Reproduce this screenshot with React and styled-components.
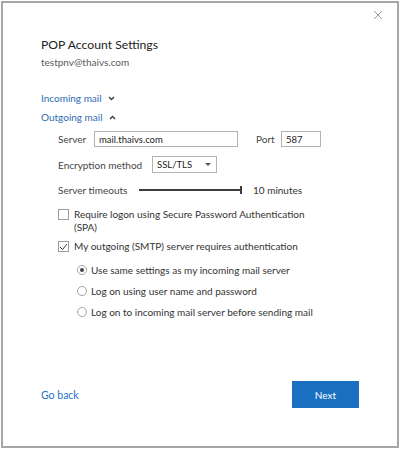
import React from 'react';
import styled, { createGlobalStyle } from 'styled-components';

const Global = createGlobalStyle`
  html, body { margin: 0; padding: 0; background: #fff; }
  body { font-family: Lato, "Noto Sans", sans-serif; }
  * { box-sizing: border-box; }
`;

const Dialog = styled.div`
  margin: 1px 0 0 1px;
  width: 398px;
  height: 447px;
  border: 2px solid #a6a6a6;
  background: #fff;
  display: flex;
  flex-direction: column;
  color: #333;
  font-size: 10px;
`;

const TopBar = styled.div`
  height: 32px;
  display: flex;
  justify-content: flex-end;
  align-items: flex-start;
  padding: 8px 15px 0 0;
`;

const CloseButton = styled.button`
  width: 8px;
  height: 8px;
  padding: 0;
  border: 0;
  background: none;
  display: flex;
`;

const Content = styled.div`
  padding: 0 38px;
  display: flex;
  flex-direction: column;
`;

const Title = styled.h1`
  margin: 0;
  font-size: 12.2px;
  line-height: 20px;
  font-weight: 400;
  color: #222;
`;

const Email = styled.div`
  font-size: 10px;
  line-height: 14px;
  color: #5a5a5a;
`;

const SectionToggle = styled.div`
  margin-top: ${p => p.$mt}px;
  display: flex;
  align-items: center;
  gap: 6px;
  font-size: 10px;
  line-height: 14px;
  color: #2d6db4;
`;

const SectionBody = styled.div`
  padding-left: 17px;
  display: flex;
  flex-direction: column;
`;

const FieldRow = styled.div`
  margin-top: ${p => p.$mt}px;
  height: ${p => p.$h}px;
  display: flex;
  align-items: center;
`;

const Label = styled.span`
  width: ${p => p.$w}px;
  margin-left: ${p => p.$ml || 0}px;
  flex: none;
  line-height: 14px;
  color: #444;
`;

const TextInput = styled.input`
  width: ${p => p.$w}px;
  height: 16px;
  border: 1px solid #b3b3b3;
  padding: 0 4px;
  font-family: inherit;
  font-size: 9.5px;
  color: #222;
  background: #fff;
  outline: none;
`;

const Select = styled.div`
  width: 65px;
  height: 17px;
  border: 1px solid #b3b3b3;
  padding: 0 5px 0 4px;
  display: flex;
  align-items: center;
  justify-content: space-between;
  font-size: 9.5px;
  color: #222;
`;

const Caret = styled.span`
  width: 0;
  height: 0;
  border-left: 3px solid transparent;
  border-right: 3px solid transparent;
  border-top: 3px solid #555;
`;

const TimeoutRow = styled.div`
  margin-top: 10px;
  height: 14px;
  display: grid;
  grid-template-columns: 81px 103px max-content;
  align-items: center;
`;

const TimeoutLabel = styled.span`
  line-height: 14px;
  color: #444;
  white-space: nowrap;
`;

const SliderTrack = styled.div`
  height: 8px;
  display: flex;
  align-items: center;
`;

const SliderLine = styled.div`
  flex: 1;
  height: 1.5px;
  background: #3c3c3c;
`;

const SliderThumb = styled.div`
  width: 2px;
  height: 8px;
  background: #3c3c3c;
`;

const SliderValue = styled.span`
  padding-left: 11px;
  color: #333;
  white-space: nowrap;
`;

const CheckRow = styled.div`
  margin-top: ${p => p.$mt}px;
  display: flex;
  align-items: flex-start;
  gap: 5px;
`;

const CheckBox = styled.span`
  flex: none;
  width: 11px;
  height: 11px;
  margin-top: 1px;
  border: 1px solid #9c9c9c;
  background: #fff;
  display: flex;
  align-items: center;
  justify-content: center;
`;

const CheckText = styled.span`
  line-height: 13px;
  max-width: 240px;
  color: #333;
`;

const RadioGroup = styled.div`
  margin-top: 10px;
  padding-left: 19px;
  display: flex;
  flex-direction: column;
  gap: 8px;
`;

const RadioRow = styled.div`
  display: flex;
  align-items: center;
  gap: 4px;
  height: 13px;
  color: #333;
`;

const RadioCircle = styled.span`
  flex: none;
  width: 10px;
  height: 10px;
  border-radius: 50%;
  border: 1px solid #a3a3a3;
  display: flex;
  align-items: center;
  justify-content: center;
  &::after {
    content: '';
    width: 4px;
    height: 4px;
    border-radius: 50%;
    background: ${p => (p.$on ? '#444' : 'transparent')};
  }
`;

const Footer = styled.div`
  margin-top: auto;
  padding: 0 38px 38px 38px;
  display: flex;
  align-items: center;
  justify-content: space-between;
`;

const GoBack = styled.a`
  font-size: 10.5px;
  color: #2474c6;
  text-decoration: none;
`;

const NextButton = styled.button`
  width: 67px;
  height: 27px;
  border: 0;
  background: #1a6fc1;
  color: #fff;
  font-family: inherit;
  font-size: 10px;
`;

const Chevron = ({ up }) => (
  <svg width="7" height="5" viewBox="0 0 7 5">
    <path
      d={up ? 'M1 4 L3.5 1.5 L6 4' : 'M1 1 L3.5 3.5 L6 1'}
      fill="none"
      stroke="#3a3a3a"
      strokeWidth="1.4"
    />
  </svg>
);

export default function App() {
  return (
    <>
      <Global />
      <Dialog>
        <TopBar>
          <CloseButton aria-label="Close">
            <svg width="8" height="8" viewBox="0 0 8 8">
              <path d="M0 0 L8 8 M8 0 L0 8" stroke="#9a9a9a" strokeWidth="1" />
            </svg>
          </CloseButton>
        </TopBar>
        <Content>
          <Title>POP Account Settings</Title>
          <Email>testpnv@thaivs.com</Email>
          <SectionToggle $mt={22}>
            Incoming mail <Chevron />
          </SectionToggle>
          <SectionToggle $mt={5}>
            Outgoing mail <Chevron up />
          </SectionToggle>
          <SectionBody>
            <FieldRow $mt={7} $h={16}>
              <Label $w={36}>Server</Label>
              <TextInput $w={144} defaultValue="mail.thaivs.com" readOnly />
              <Label $w={25} $ml={18}>Port</Label>
              <TextInput $w={40} defaultValue="587" readOnly />
            </FieldRow>
            <FieldRow $mt={9} $h={17}>
              <Label $w={94}>Encryption method</Label>
              <Select>
                SSL/TLS <Caret />
              </Select>
            </FieldRow>
            <TimeoutRow>
              <TimeoutLabel>Server timeouts</TimeoutLabel>
              <SliderTrack>
                <SliderLine />
                <SliderThumb />
              </SliderTrack>
              <SliderValue>10 minutes</SliderValue>
            </TimeoutRow>
            <CheckRow $mt={11}>
              <CheckBox />
              <CheckText>Require logon using Secure Password Authentication (SPA)</CheckText>
            </CheckRow>
            <CheckRow $mt={6}>
              <CheckBox>
                <svg width="9" height="8" viewBox="0 0 9 8">
                  <path d="M1 4 L3.5 6.5 L8 1" fill="none" stroke="#333" strokeWidth="1" />
                </svg>
              </CheckBox>
              <CheckText>My outgoing (SMTP) server requires authentication</CheckText>
            </CheckRow>
            <RadioGroup>
              <RadioRow>
                <RadioCircle $on />
                Use same settings as my incoming mail server
              </RadioRow>
              <RadioRow>
                <RadioCircle />
                Log on using user name and password
              </RadioRow>
              <RadioRow>
                <RadioCircle />
                Log on to incoming mail server before sending mail
              </RadioRow>
            </RadioGroup>
          </SectionBody>
        </Content>
        <Footer>
          <GoBack href="#">Go back</GoBack>
          <NextButton>Next</NextButton>
        </Footer>
      </Dialog>
    </>
  );
}
